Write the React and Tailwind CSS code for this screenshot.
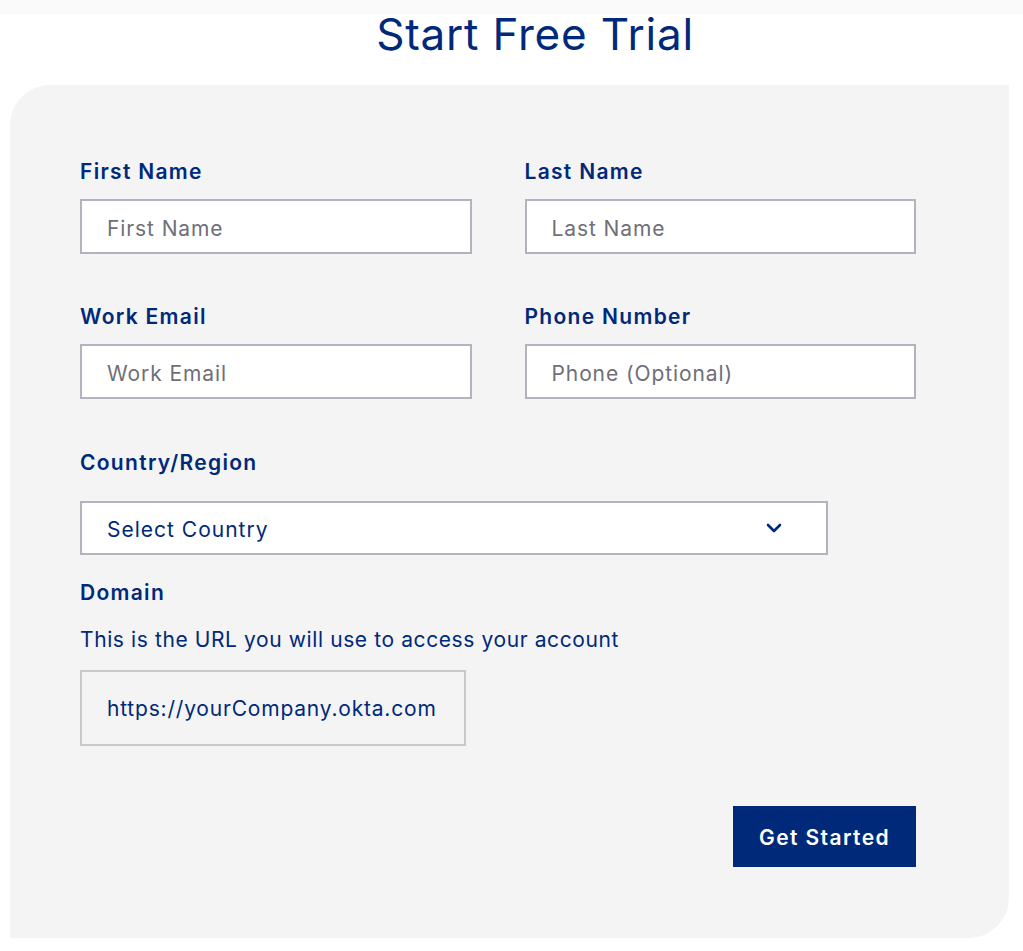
import { ChevronDown } from "lucide-react";

const navy = "text-[#00297a]";
const labelCls = `block text-[21px] leading-[28px] font-semibold tracking-[1.3px] ${navy}`;

function Field({ label, placeholder }) {
  return (
    <div>
      <label className={`${labelCls} pt-[1px] mb-[13px]`}>{label}</label>
      <input
        placeholder={placeholder}
        className="w-full h-[55px] bg-white border-2 border-[#b3b3bd] pl-[25px] pt-[3px] text-[21px] tracking-[0.9px] text-[#00297a] placeholder:text-[#6f6f78] outline-none"
      />
    </div>
  );
}

export default function App() {
  return (
    <div className="min-h-screen bg-white font-['Inter','Liberation_Sans',sans-serif]">
      <div className="h-[14px] bg-[#fafafa]" />
      <h1 className={`text-center text-[44px] leading-[40px] font-normal tracking-[0.8px] ${navy} pl-[47px]`}>
        Start Free Trial
      </h1>
      <div className="mt-[31px] ml-[10px] w-[999px] bg-[#f4f4f4] rounded-tl-[40px] rounded-br-[40px] pl-[70px] pr-[93px] pt-[72px] pb-[71px]">
        <div className="grid grid-cols-2 gap-x-[53px] gap-y-[48px]">
          <Field label="First Name" placeholder="First Name" />
          <Field label="Last Name" placeholder="Last Name" />
          <Field label="Work Email" placeholder="Work Email" />
          <Field label="Phone Number" placeholder="Phone (Optional)" />
        </div>

        <label className={`${labelCls} mt-[50px]`}>Country/Region</label>
        <div className="mt-[24px] w-[748px] h-[54px] bg-white border-2 border-[#b3b3bd] flex items-center justify-between pl-[25px] pr-[40px]">
          <span className={`pt-[4px] text-[21px] tracking-[1px] ${navy}`}>Select Country</span>
          <ChevronDown size={24} strokeWidth={2.6} className="text-[#00297a]" />
        </div>

        <label className={`${labelCls} mt-[24px]`}>Domain</label>
        <p className={`mt-[19px] text-[21px] leading-[28px] tracking-[0.6px] ${navy}`}>
          This is the URL you will use to access your account
        </p>
        <div className="mt-[16px] w-[386px] h-[76px] border-2 border-[#c9c9cc] flex items-center pl-[25px]">
          <span className={`pt-[2px] text-[21px] tracking-[0.8px] ${navy}`}>https://yourCompany.okta.com</span>
        </div>

        <div className="mt-[60px] flex justify-end">
          <button className="w-[183px] h-[61px] pt-[3px] bg-[#00297a] text-white text-[21px] font-semibold tracking-[1.4px]">
            Get Started
          </button>
        </div>
      </div>
    </div>
  );
}
